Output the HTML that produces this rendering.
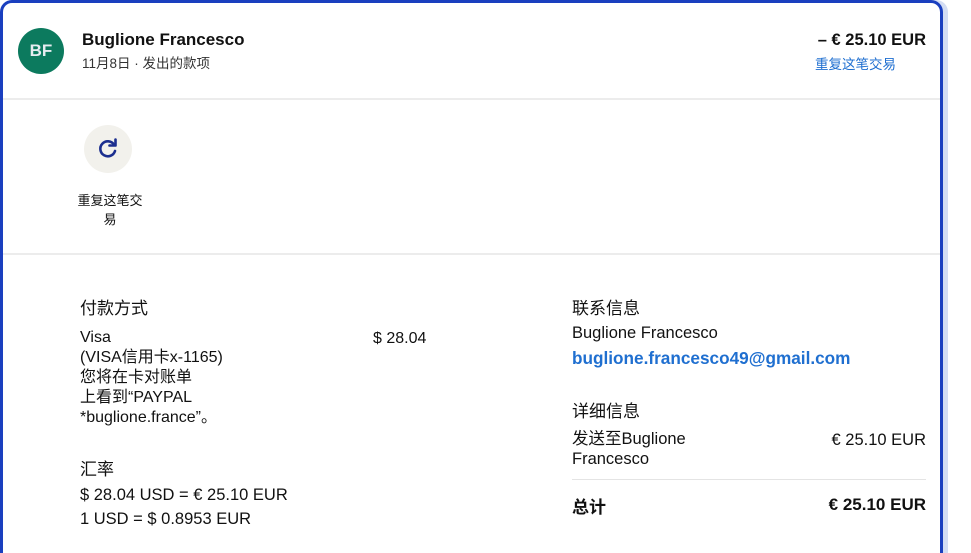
<!DOCTYPE html>
<html><head><style>
html,body{margin:0;width:971px;height:553px;overflow:hidden;}
body{background:#fff;font-family:"Liberation Sans","Noto Sans CJK SC",sans-serif;color:#111;position:relative;}
.glow{position:absolute;left:0;top:0;width:948px;height:553px;background:#d3ddf3;border-radius:12px 12px 0 0;}
.card{position:absolute;left:0;top:0;width:937px;height:550px;border:3px solid #1a3fbf;border-bottom:0;border-radius:12px 12px 0 0;background:#fff;}
.a{position:absolute;white-space:nowrap;}
.hr{position:absolute;left:0;right:0;height:2px;background:#ececec;}
</style></head><body>
<div class="glow"></div>
<div class="card">
<div class="a" style="left:15px;top:25px;width:46px;height:46px;border-radius:50%;background:#0c7a5e;color:#e6ecf0;font-size:17px;font-weight:bold;text-align:center;line-height:46px;">BF</div>
<div class="a" style="left:79px;top:27px;font-size:17px;font-weight:bold;">Buglione Francesco</div>
<div class="a" style="left:79px;top:49px;font-size:13.5px;color:#333;">11月8日 · 发出的款项</div>
<div class="a" style="right:14px;top:28px;font-size:16.5px;font-weight:bold;">– € 25.10 EUR</div>
<div class="a" style="right:44px;top:50px;font-size:13.5px;color:#1f6fd0;">重复这笔交易</div>
<div class="hr" style="top:95px"></div>
<div class="a" style="left:81px;top:122px;width:48px;height:48px;border-radius:50%;background:#f2f1ec;">
<svg width="48" height="48" viewBox="0 0 48 48"><path d="M30 19.5A7.5 7.5 0 1 0 31 26" fill="none" stroke="#1c2f8f" stroke-width="2.6" stroke-linecap="round"/><path d="M31.5 14.5v6h-6" fill="none" stroke="#1c2f8f" stroke-width="2.6" stroke-linecap="round" stroke-linejoin="round"/></svg></div>
<div class="a" style="left:70px;top:188px;width:74px;text-align:center;font-size:13px;line-height:19px;white-space:normal;">重复这笔交易</div>
<div class="hr" style="top:250px"></div>
<div class="a" style="left:77px;top:291px;font-size:17px;">付款方式</div>
<div class="a" style="left:77px;top:325px;font-size:16px;line-height:20px;">Visa<br>(VISA信用卡x-1165)<br>您将在卡对账单<br>上看到“PAYPAL<br>*buglione.france”。</div>
<div class="a" style="left:370px;top:327px;font-size:16px;">$ 28.04</div>
<div class="a" style="left:77px;top:452px;font-size:17px;">汇率</div>
<div class="a" style="left:77px;top:480px;font-size:16.5px;line-height:24px;">$ 28.04 USD = € 25.10 EUR<br>1 USD = $ 0.8953 EUR</div>
<div class="a" style="left:569px;top:291px;font-size:17px;">联系信息</div>
<div class="a" style="left:569px;top:321px;font-size:16.5px;">Buglione Francesco</div>
<div class="a" style="left:569px;top:345px;font-size:17.2px;font-weight:bold;color:#1f6fd0;">buglione.francesco49@gmail.com</div>
<div class="a" style="left:569px;top:394px;font-size:17px;">详细信息</div>
<div class="a" style="left:569px;top:426px;font-size:16.5px;line-height:20px;">发送至Buglione<br>Francesco</div>
<div class="a" style="right:14px;top:428px;font-size:16.5px;">€ 25.10 EUR</div>
<div class="a" style="left:569px;right:14px;top:476px;height:1px;background:#e4e4e4;"></div>
<div class="a" style="left:569px;top:490px;font-size:17px;font-weight:bold;">总计</div>
<div class="a" style="right:14px;top:492px;font-size:17px;font-weight:bold;">€ 25.10 EUR</div>
</div>
</body></html>
